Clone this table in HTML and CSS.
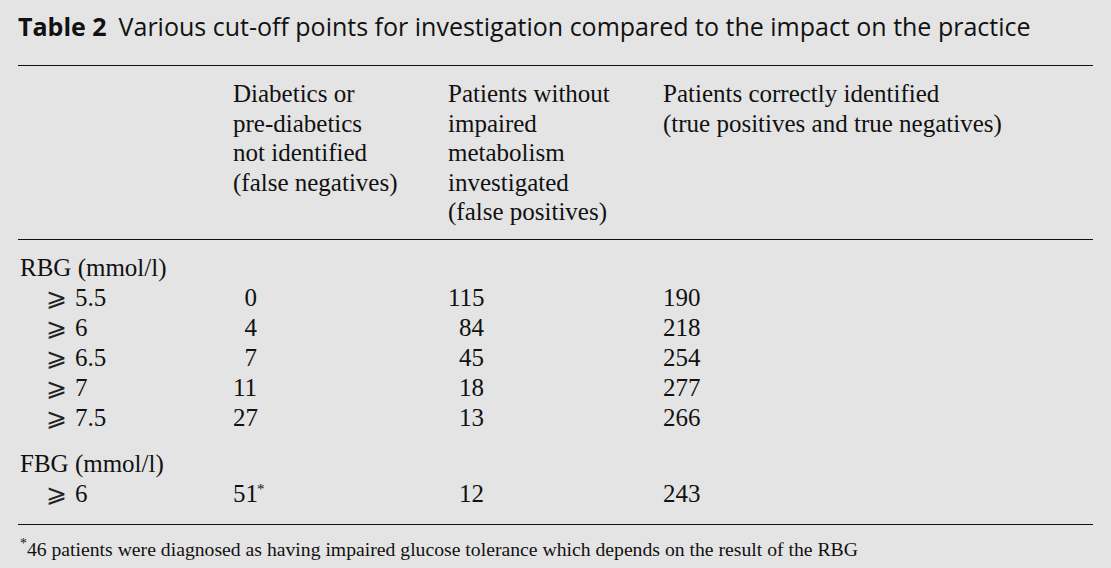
FILE: index.html
```html
<!DOCTYPE html>
<html lang="en">
<head>
<meta charset="utf-8">
<title>Table 2</title>
<link rel="stylesheet" href="styles.css">
</head>
<body>
<div class="page">
  <h1 class="caption"><span class="label">Table 2</span>Various cut-off points for investigation compared to the impact on the practice</h1>
  <table class="data">
    <colgroup>
      <col class="c1"><col class="c2"><col class="c3"><col class="c4">
    </colgroup>
    <thead>
      <tr>
        <th></th>
        <th>Diabetics or<br>pre-diabetics<br>not identified<br>(false negatives)</th>
        <th>Patients without<br>impaired<br>metabolism<br>investigated<br>(false positives)</th>
        <th>Patients correctly identified<br>(true positives and true negatives)</th>
      </tr>
    </thead>
    <tbody class="group first">
      <tr><td class="grp" colspan="4">RBG (mmol/l)</td></tr>
      <tr><td class="cut"><span class="geq">&#x2A7E;</span><span class="val">5.5</span></td><td><span class="n2">0</span></td><td><span class="n3">115</span></td><td>190</td></tr>
      <tr><td class="cut"><span class="geq">&#x2A7E;</span><span class="val">6</span></td><td><span class="n2">4</span></td><td><span class="n3">84</span></td><td>218</td></tr>
      <tr><td class="cut"><span class="geq">&#x2A7E;</span><span class="val">6.5</span></td><td><span class="n2">7</span></td><td><span class="n3">45</span></td><td>254</td></tr>
      <tr><td class="cut"><span class="geq">&#x2A7E;</span><span class="val">7</span></td><td><span class="n2">11</span></td><td><span class="n3">18</span></td><td>277</td></tr>
      <tr><td class="cut"><span class="geq">&#x2A7E;</span><span class="val">7.5</span></td><td><span class="n2">27</span></td><td><span class="n3">13</span></td><td>266</td></tr>
    </tbody>
    <tbody class="group last">
      <tr><td class="grp" colspan="4">FBG (mmol/l)</td></tr>
      <tr><td class="cut"><span class="geq">&#x2A7E;</span><span class="val">6</span></td><td><span class="n2">51</span><sup class="star">*</sup></td><td><span class="n3">12</span></td><td>243</td></tr>
    </tbody>
  </table>
  <p class="note"><sup class="star">*</sup>46 patients were diagnosed as having impaired glucose tolerance which depends on the result of the RBG</p>
</div>
</body>
</html>
```

FILE: styles.css
```css
html, body {
  margin: 0;
  padding: 0;
  background: #e4e4e4;
}

.page {
  padding: 11px 18px 0 18px;
  width: 1075px;
  color: #111;
  font-family: "Liberation Serif", "Times New Roman", serif;
}

.caption {
  margin: 0 0 24px 0;
  font-family: "Open Sans", "Noto Sans", sans-serif;
  font-weight: 400;
  font-size: 25px;
  line-height: 30px;
  white-space: nowrap;
}

.caption .label {
  font-weight: 700;
  margin-right: 12px;
}

.data {
  width: 1075px;
  border-collapse: collapse;
  table-layout: fixed;
  font-size: 25px;
}

.c1, .c2, .c3 { width: 215px; }
.c4 { width: 430px; }

.data th, .data td {
  padding: 0;
  text-align: left;
  vertical-align: top;
  font-weight: 400;
  white-space: nowrap;
}

.data thead tr {
  border-top: 1px solid #111;
  border-bottom: 1px solid #111;
}

.data thead th {
  line-height: 29.5px;
  padding-top: 13px;
  padding-bottom: 12px;
}

.data tbody td {
  line-height: 30px;
}

.data td.grp {
  padding-left: 2px;
}

.data td.cut {
  padding-left: 28px;
}

.geq {
  font-family: "DejaVu Sans", sans-serif;
  font-size: 25px;
  font-weight: 300;
  line-height: 0;
  color: #222;
}

.val {
  font-family: "Liberation Serif", "Times New Roman", serif;
  margin-left: 8px;
}

.group.first tr:first-child td { padding-top: 13px; }
.group.last tr:first-child td { padding-top: 16px; }
.group.last tr:last-child td { padding-bottom: 15px; }
.group.last { border-bottom: 1px solid #111; }

.n2 {
  display: inline-block;
  width: 24px;
  text-align: right;
}

.n3 {
  display: inline-block;
  width: 36px;
  text-align: right;
}

.star {
  font-size: 0.6em;
  line-height: 0;
  vertical-align: 0.55em;
}

.note {
  margin: 12px 0 0 2px;
  font-size: 19.7px;
  line-height: 24px;
}

.note .star {
  font-size: 0.7em;
}
```
